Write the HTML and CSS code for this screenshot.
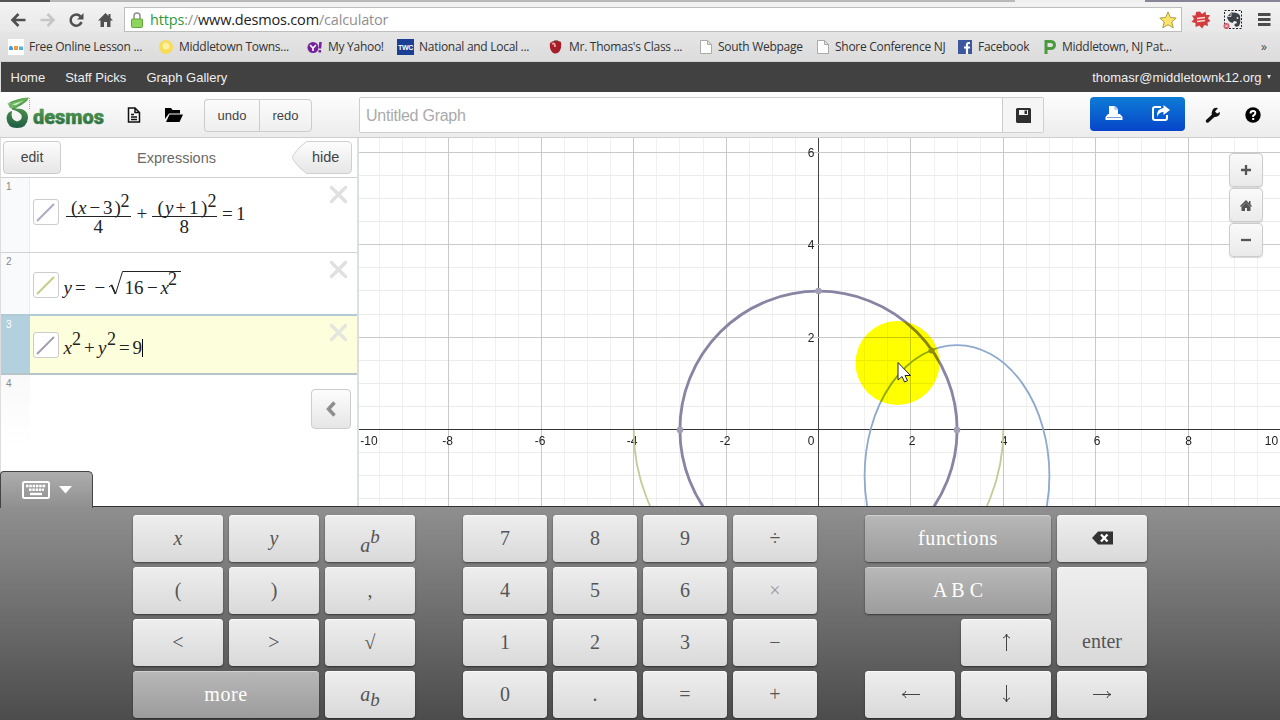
FILE: index.html
```html
<!DOCTYPE html>
<html lang="en">
<head>
  <meta charset="UTF-8" />
  <title>Desmos Calculator</title>
  <link rel="stylesheet" href="styles.css">
</head>
<body>
  <div class="tabstrip"><span class="tab-dark"></span><span class="tab-active"></span><span class="tab-end"></span></div>

  <div class="toolbar">
    <svg width="130" height="30" viewBox="0 0 130 30">
      <g fill="none" stroke="#505050" stroke-width="2.6">
        <path d="M12.500 18H25.500M18.500 12L12.500 18L18.500 24" />
        <path d="M40.500 18H53M47.500 12L53.500 18L47.500 24" stroke="#c6c6c6" />
        <path d="M80.500 14.500A5.600 5.600 0 1 0 81.500 20" />
      </g>
      <path d="M83.500 11V17.500H77Z" fill="#505050" />
      <path d="M105.500 11L98 18.500H100.500V25H104V20H107V25H110.500V18.500H113L110.500 16V12H108.500V14Z" fill="#505050" />
    </svg>
    <div class="address">
      <svg width="14" height="18" viewBox="0 0 14 18">
        <path d="M4 9V5Q4 2 7 2T10 5V9" fill="none" stroke="#8d8d8d" stroke-width="1.500" />
        <rect x="1.500" y="8" width="11" height="8.500" rx="1" fill="#8fd45c" stroke="#5fa73a" />
      </svg>
      <span class="url"><span class="secure">https</span><span class="dim">://</span>www.desmos.com<span class="dim">/calculator</span></span>
      <svg class="star" width="18" height="18" viewBox="0 0 18 18">
        <path d="M9 1L11.400 6.500L17.200 7L12.800 11L14.200 16.800L9 13.700L3.800 16.800L5.200 11L0.800 7L6.600 6.500Z" fill="#fbe46c" stroke="#b19a45" />
      </svg>
    </div>
    <svg width="98" height="30" viewBox="0 0 98 30">
      <path d="M18 9.500L20 12L23.500 9.500L24 13L28 13L26 16.500L28.500 19L25.500 20.500L26 24L22.500 23L20 26.500L17.500 23.500L13.500 25L13.500 21L9.500 20L12 17L10 13.500L13.500 13.500L14 10Z" fill="#d23c3c" />
      <path d="M15 16.500L23 15.500M15 19.500L23 18.500" stroke="#ffd9d9" stroke-width="1.600" />
      <rect x="42.500" y="8.500" width="17" height="18" fill="#eee" stroke="#222" stroke-dasharray="2 1.500" />
      <path d="M45 15L49 10.500Q57 10 58 14Q59 20 57 24Q52 26 52.500 22L55 21Q55 19 52 19L50.500 21Q46 20 45 15Z" fill="#3d4248" />
      <path d="M49 11V14.500H45.500" fill="none" stroke="#eee" stroke-width=".8" />
      <circle cx="55.500" cy="16" r="1" fill="#ddd" />
      <circle cx="44.500" cy="24" r="3" fill="#cf5a69" />
      <path d="M43.200 22.700L45.800 25.300M45.800 22.700L43.200 25.300" stroke="#fff" stroke-width=".8" />
      <path d="M76 12.500H88.500M76 17.500H88.500M76 22.500H88.500" stroke="#4c4c4c" stroke-width="2.800" />
    </svg>
  </div>

  <div class="bookmarks">
    <a class="bm"><svg width="16" height="16"><rect width="16" height="16" fill="#fff" /><path d="M1 8.500Q2.500 5 5 8.500V11H1Z" fill="#3aa0dd" /><path d="M6 7H10V11H6Z" fill="#f29a38" /><path d="M11 11V7.500H15V11Z" fill="#52b3dd" /></svg>Free Online Lesson ...</a>
    <a class="bm"><svg width="16" height="16"><circle cx="8" cy="8" r="7" fill="#f6dc58" /><circle cx="8" cy="7" r="3.500" fill="#fff1a0" /></svg>Middletown Towns...</a>
    <a class="bm"><svg width="16" height="16"><circle cx="6" cy="8.500" r="5.500" fill="#76209b" /><path d="M3 6L6 9L9 6M6 9V12" stroke="#fff" stroke-width="1.600" fill="none" /><path d="M13.500 3L13 9.500M12.800 11V13.500" stroke="#76209b" stroke-width="2.500" /></svg>My Yahoo!</a>
    <a class="bm"><svg width="17" height="16"><rect width="17" height="16" fill="#1b3f95" /><text x="1" y="11" class="twc" textLength="15">TWC</text></svg>National and Local ...</a>
    <a class="bm"><svg width="16" height="16"><path d="M2 4Q7 0 13 3Q14 9 11 13Q7 16 4 13Q1 9 2 4Z" fill="#a51f2b" /><path d="M4 5Q7 3 7 8" stroke="#ee9a9a" stroke-width="2" fill="none" /><path d="M6 2H10" stroke="#55402c" /></svg>Mr. Thomas's Class ...</a>
    <a class="bm"><svg width="14" height="16"><path d="M1.500 1.500H8.500L12.500 5.500V14.500H1.500ZM8.500 1.500V5.500H12.500" fill="#fff" stroke="#aaa" /></svg>South Webpage</a>
    <a class="bm"><svg width="14" height="16"><path d="M1.500 1.500H8.500L12.500 5.500V14.500H1.500ZM8.500 1.500V5.500H12.500" fill="#fff" stroke="#aaa" /></svg>Shore Conference NJ</a>
    <a class="bm"><svg width="16" height="16"><rect x="1" y="1" width="14" height="14" fill="#3b579d" /><path d="M13 4H11.500Q10 4 10 6V15M7 8.500H13" fill="none" stroke="#fff" stroke-width="2.200" /></svg>Facebook</a>
    <a class="bm"><svg width="14" height="16"><path d="M3 15V2.500H7Q11.500 2.500 11.500 6T7 9.500H3" fill="none" stroke="#4b9a3e" stroke-width="3" /></svg>Middletown, NJ Pat...</a>
    <span class="more-bm">»</span>
  </div>

  <nav class="site-nav">
    <a>Home</a>
    <a>Staff Picks</a>
    <a>Graph Gallery</a>
    <span class="user">thomasr@middletownk12.org <i class="caret"></i></span>
  </nav>

  <header class="header">
    <svg class="logo" width="105" height="45" viewBox="0 0 105 45">
      <defs>
        <linearGradient id="green" x1="0" y1="0" x2="0" y2="1">
          <stop offset="0" stop-color="#62ad50" />
          <stop offset="1" stop-color="#1f5c43" />
        </linearGradient>
      </defs>
      <path d="M7 12Q16 6 29 5.500L27 9Q21 14 15 16.500Q28 16 28 26Q27 36 17 36Q7 36 6.500 26Q7 20 12 19Q10 28 17 29.500Q23 28 21.500 23Q19 19 12 17.500Q10 16 15 14L22 9.500Q15 10 7 12Z" fill="url(#green)" />
      <path d="M8 12L27 6.500L15 15.500L10 16Z" fill="#6fb562" />
      <path d="M12 12.500L24 8.500L16 13Z" fill="#dcecd8" />
      <path d="M29.500 6V17" stroke="#7da7cd" stroke-dasharray="1 1" />
      <text x="33" y="32" class="logo-text" textLength="71" lengthAdjust="spacingAndGlyphs" fill="url(#green)" stroke="#3f8a4c" stroke-width=".5">desmos</text>
    </svg>
    <svg class="icon-new" width="14" height="16" viewBox="0 0 14 16">
      <path d="M1.500 1H8L12.500 5.500V15H1.500ZM8 1V5.500H12.500M4 7.500H7M4 10H10M4 12.500H10" fill="none" stroke="#111" stroke-width="1.500" />
    </svg>
    <svg class="icon-open" width="18" height="15" viewBox="0 0 18 15">
      <path d="M0 0H6L7.500 2H15V5.500H4L0 11Z" fill="#000" />
      <path d="M4.500 6.500H18L14.500 14H1Z" fill="#000" />
    </svg>
    <div class="undo-redo"><button>undo</button><button>redo</button></div>
    <div class="title-box">
      <span class="title">Untitled Graph</span>
      <button class="save">
        <svg width="15" height="15" viewBox="0 0 15 15"><path d="M1 0H14L15 1V15H1L0 14V1Z" fill="#2e2e2e" /><path d="M3 2H12V7H3Z" fill="#f2f2f2" /><path d="M8.500 2.500H11V6H8.500Z" fill="#2e2e2e" /></svg>
      </button>
    </div>
    <div class="share">
      <svg width="18" height="16" viewBox="0 0 18 16"><path d="M4 1H10L13 4V9H4Z" fill="#fff" /><path d="M10 1V4H13" fill="none" stroke="#6da7e6" /><path d="M3 9H15L17.500 12V15H.5V12Z" fill="#fff" /><path d="M2 12.500H16" stroke="#1861cc" stroke-width=".6" /></svg>
      <svg width="18" height="16" viewBox="0 0 18 16"><path d="M9 2H3Q1 2 1 4V13Q1 15 3 15H13Q15 15 15 13V10" fill="none" stroke="#fff" stroke-width="2" /><path d="M11.500 0L18 5L11.500 10V7Q7 7 5 12Q4 4 11.500 3Z" fill="#fff" /></svg>
    </div>
    <svg class="icon-wrench" width="16" height="17" viewBox="0 0 16 17">
      <path d="M2.500 14L9 8" stroke="#111" stroke-width="3.500" stroke-linecap="round" />
      <path d="M13 1Q9 0 7.500 3Q6 6 7 9Q10 11 13 9Q15 8 15 5L12 6.500L10 4.500Z" fill="#111" />
    </svg>
    <svg class="icon-help" width="16" height="16" viewBox="0 0 16 16">
      <circle cx="8" cy="8" r="7.700" fill="#000" />
      <path d="M5.500 6.500Q5.500 4 8 4T10.300 6.200Q10.300 7.500 8.200 8.600V10" fill="none" stroke="#fff" stroke-width="1.900" />
      <rect x="7.200" y="11" width="2" height="2" fill="#fff" />
    </svg>
  </header>

  <main class="main">
    <section class="panel">
      <div class="panel-head">
        <button class="edit">edit</button>
        <span class="panel-title">Expressions</span>
        <svg width="60" height="34" viewBox="0 0 60 34">
          <defs>
            <linearGradient id="btn" x1="0" y1="0" x2="0" y2="1">
              <stop offset="0" stop-color="#fdfdfd" />
              <stop offset="1" stop-color="#e6e6e6" />
            </linearGradient>
          </defs>
          <path d="M14.500 .5H55Q59.500 .5 59.500 5V28Q59.500 32.500 55 32.500H14.500L8 27Q.5 19 .5 16.500T8 6Z" fill="url(#btn)" stroke="#cfcfcf" />
          <text x="20" y="20.500" class="hide-text">hide</text>
        </svg>
      </div>

      <div class="expr row1">
        <div class="num">1</div>
        <div class="swatch"><svg width="24" height="24"><path d="M3 21L20 4" stroke="#a9abc3" stroke-width="2" /></svg></div>
        <svg class="math" width="270" height="74" viewBox="60 178 270 74">
          <text y="214"><tspan x="71">(</tspan><tspan x="78" class="it">x</tspan><tspan x="89.500">−</tspan><tspan x="103">3</tspan><tspan x="114.500">)</tspan></text>
          <text x="120.500" y="207" class="sup">2</text>
          <text x="93.500" y="233">4</text>
          <text x="136.500" y="220">+</text>
          <text y="214"><tspan x="157.500">(</tspan><tspan x="165" class="it">y</tspan><tspan x="175.500">+</tspan><tspan x="189">1</tspan><tspan x="201">)</tspan></text>
          <text x="207.500" y="207" class="sup">2</text>
          <text x="179.500" y="233">8</text>
          <text y="220"><tspan x="222">=</tspan><tspan x="236">1</tspan></text>
          <path d="M66 216.500H131M152 216.500H217" stroke="#222" />
        </svg>
        <span class="close"></span>
      </div>

      <div class="expr row2">
        <div class="num">2</div>
        <div class="swatch"><svg width="24" height="24"><path d="M3 21L20 4" stroke="#c6cc86" stroke-width="2" /></svg></div>
        <svg class="math" width="270" height="61" viewBox="60 253 270 61">
          <text y="294"><tspan x="63.500" class="it">y</tspan><tspan x="75">=</tspan><tspan x="94.500">−</tspan><tspan x="124.500">16</tspan><tspan x="147">−</tspan><tspan x="160.500" class="it">x</tspan></text>
          <text x="168" y="285" class="sup">2</text>
          <path d="M109 287L111.500 285L115.500 294L122.500 271.500H181" fill="none" stroke="#222" />
          <path d="M111.500 285L115.500 294" stroke="#222" stroke-width="1.800" />
        </svg>
        <span class="close"></span>
      </div>

      <div class="expr row3 active">
        <div class="num">3</div>
        <div class="swatch"><svg width="24" height="24"><path d="M3 21L20 4" stroke="#a09fae" stroke-width="2" /></svg></div>
        <svg class="math" width="270" height="58" viewBox="60 316 270 58">
          <text y="354"><tspan x="63.500" class="it">x</tspan><tspan x="84">+</tspan><tspan x="98" class="it">y</tspan><tspan x="119">=</tspan><tspan x="132.500">9</tspan></text>
          <text y="345" class="sup"><tspan x="72">2</tspan><tspan x="107">2</tspan></text>
          <path d="M142.500 339V357" stroke="#000" />
        </svg>
        <span class="close"></span>
      </div>

      <div class="expr row4">
        <div class="num">4</div>
        <button class="collapse"><svg width="14" height="16" viewBox="0 0 14 16"><path d="M10.500 1.500L4.500 8L10.500 14.500" fill="none" stroke="#8e8e8e" stroke-width="3.500" /></svg></button>
      </div>
    </section>

    <section class="graph">
      <svg id="plot" width="921" height="368" viewBox="359 138 921 368">
        <g id="grid"></g>
        <path d="M633.700 430A184.800 184.800 0 0 0 1003.300 430" class="curve green" />
        <ellipse cx="957" cy="475.800" rx="92.400" ry="130.700" class="curve blue" />
        <circle cx="818.500" cy="429.800" r="138.600" class="curve purple" />
        <g fill="#a3a0b5">
          <circle cx="818.500" cy="291" r="3.300" />
          <circle cx="680" cy="430" r="3.300" />
          <circle cx="957" cy="430" r="3.300" />
          <circle cx="931.500" cy="350.500" r="3" fill="#8f8f9d" />
        </g>
        <circle cx="897.500" cy="363" r="42" class="spot" />
        <path d="M898 362.500V380L902 376.500L904.500 382L907.500 380.700L905 375.500H910.500Z" fill="#fff" stroke="#222" />
      </svg>
      <div class="zoom">
        <button><svg width="12" height="12"><path d="M1 6H11M6 1V11" stroke="#555" stroke-width="2.300" /></svg></button>
        <button><svg width="12" height="11" viewBox="0 0 12 11"><path d="M6 0L0 6L1 7L6 2.500L11 7L12 6L10.500 4.500V1H9V3Z" fill="#555" /><path d="M6 2.500L10.500 7V11H7V8H5V11H1.500V7Z" fill="#555" /></svg></button>
        <button><svg width="12" height="12"><path d="M1 6H11" stroke="#555" stroke-width="2.300" /></svg></button>
      </div>
    </section>
  </main>

  <footer class="keypad">
    <div class="kb-tab">
      <svg width="28" height="18" viewBox="0 0 28 18">
        <rect x="1" y="1" width="26" height="16" rx="1.500" fill="none" stroke="#fff" stroke-width="2" />
        <path d="M4 5H24M7 8.800H22" stroke="#fff" stroke-width="2.600" stroke-dasharray="2.500 .8" />
        <path d="M8 13H20" stroke="#fff" stroke-width="2.400" />
      </svg>
      <svg width="13" height="8"><path d="M0 0H13L6.500 7.500Z" fill="#fff" /></svg>
    </div>
    <div class="keys wide">
      <button class="it">x</button><button class="it">y</button><button class="it power">a<sup>b</sup></button>
      <button>(</button><button>)</button><button>,</button>
      <button>&lt;</button><button>&gt;</button><button>√</button>
      <button class="dark span2">more</button><button class="it">a<sub>b</sub></button>
    </div>
    <div class="keys digits">
      <button>7</button><button>8</button><button>9</button><button>÷</button>
      <button>4</button><button>5</button><button>6</button><button class="faint">×</button>
      <button>1</button><button>2</button><button>3</button><button>−</button>
      <button>0</button><button>.</button><button>=</button><button>+</button>
    </div>
    <div class="keys wide">
      <button class="dark span2">functions</button>
      <button><svg width="21" height="14" viewBox="0 0 21 14"><path d="M0 7L6 .5H21V13.500H6Z" fill="#333" /><path d="M9 3.500L15.500 10.500M15.500 3.500L9 10.500" stroke="#fff" stroke-width="2.300" /></svg></button>
      <button class="dark span2 abc">A B C</button>
      <button class="enter">enter</button>
      <button class="up"><svg width="9" height="18"><path d="M4.500 1V18M1 5Q4 4 4.500 1Q5 4 8 5" fill="none" stroke="#444" /></svg></button>
      <button><svg width="19" height="9"><path d="M19 4.500H1M5 1Q4 4 1 4.500Q4 5 5 8" fill="none" stroke="#444" /></svg></button>
      <button><svg width="9" height="18"><path d="M4.500 0V17M1 13Q4 14 4.500 17Q5 14 8 13" fill="none" stroke="#444" /></svg></button>
      <button><svg width="19" height="9"><path d="M0 4.500H18M14 1Q15 4 18 4.500Q15 5 14 8" fill="none" stroke="#444" /></svg></button>
    </div>
  </footer>

  <script src="script.js"></script>
</body>
</html>
```

FILE: styles.css
```css
* {
  box-sizing: border-box;
}

body {
  margin: 0;
  width: 1280px;
  height: 720px;
  overflow: hidden;
  font-family: "Liberation Sans", Arial, sans-serif;
  background: #fff;
}

button {
  margin: 0;
  padding: 0;
  font-family: inherit;
  color: #444;
  border: 1px solid #ccc;
  background: linear-gradient(#fdfdfd, #e6e6e6);
}

svg {
  display: block;
  flex-shrink: 0;
}

/* browser */
.tabstrip {
  display: flex;
  height: 2px;
  background: #b9b9b9;
}

.tab-dark {
  width: 50px;
  background: #555;
}

.tab-active {
  width: 130px;
  margin-left: 965px;
  background: #efefef;
}

.tab-end {
  flex: 1;
  background: #888596;
}

.toolbar {
  display: flex;
  height: 30px;
  background: linear-gradient(#f3f3f3, #e8e8e8);
}

.address {
  display: flex;
  align-items: center;
  width: 1058px;
  height: 25px;
  margin: 5px 0 0 -6px;
  padding-left: 5px;
  background: #fff;
  border: 1px solid #bdbdbd;
}

.url {
  margin-left: 6px;
  font: 14.5px/20px "Open Sans", sans-serif;
  letter-spacing: -0.18px;
  color: #222;
}

.secure {
  color: #2e9a3c;
}

.dim {
  color: #909090;
}

.star {
  margin: 0 4px 0 auto;
}

.bookmarks {
  display: grid;
  grid-template-columns: 150px 149px 90px 151px 151px 117px 141px 86px 212px 20px;
  align-items: center;
  height: 30px;
  padding-left: 8px;
  background: linear-gradient(#e5e5e5, #dcdcdc);
  border-bottom: 1px solid #cfcfcf;
  font: 12px "Open Sans", sans-serif;
  letter-spacing: -0.28px;
  color: #333;
}

.bm {
  display: flex;
  align-items: center;
  gap: 5px;
  white-space: nowrap;
}

.twc {
  font: bold 7px "Liberation Sans", sans-serif;
  fill: #fff;
}

.more-bm {
  color: #444;
  padding-left: 6px;
}

/* site */
.site-nav {
  display: flex;
  align-items: center;
  gap: 20px;
  height: 30px;
  padding: 0 9.5px;
  border-left: 1px solid #ddd;
  background: #414141;
  color: #eee;
  font-size: 13px;
}

.user {
  display: flex;
  align-items: center;
  margin-left: auto;
}

.caret {
  margin-left: 5px;
  border: 2.5px solid transparent;
  border-top: 4px solid #ddd;
  border-bottom: 0;
}

.header {
  display: flex;
  align-items: flex-start;
  height: 46px;
  background: linear-gradient(#fefefe, #ececec);
  border-bottom: 1px solid #cfcfcf;
}

.logo-text {
  font: 900 20px "Roboto", sans-serif;
}

.icon-new {
  margin: 15px 0 0 22px;
}

.icon-open {
  margin: 16px 0 0 24px;
}

.undo-redo {
  display: flex;
  width: 108px;
  height: 33px;
  margin: 7px 0 0 21px;
}

.undo-redo button {
  flex: 1;
  font-size: 13px;
  border-radius: 0 4px 4px 0;
  background: linear-gradient(#fbfbfb, #efefef);
}

.undo-redo button:first-child {
  flex: 0 0 55px;
  border-right: 0;
  border-radius: 4px 0 0 4px;
}

.title-box {
  display: flex;
  width: 685px;
  height: 36px;
  margin: 5px 0 0 47px;
  background: #fff;
  border: 1px solid #cfcfcf;
  border-radius: 2px;
}

.title {
  flex: 1;
  padding-left: 6px;
  font-size: 16px;
  letter-spacing: -0.25px;
  line-height: 35px;
  color: #aaa;
}

.save {
  width: 41px;
  border-width: 0 0 0 1px;
  background: #f5f5f5;
  display: flex;
  align-items: center;
  justify-content: center;
}

.share {
  display: flex;
  justify-content: space-between;
  width: 95px;
  height: 34px;
  margin: 5px 0 0 46px;
  padding: 8px 15px;
  border-radius: 4px;
  background: linear-gradient(#0d7cd6, #0745ca);
}

.icon-wrench {
  margin: 15px 0 0 20px;
}

.icon-help {
  margin: 15px 0 0 24px;
}

.main {
  display: flex;
  height: 368px;
}

.panel {
  width: 359px;
  border-left: 1px solid #ddd;
  border-right: 2px solid #dcdfe2;
}

.panel-head {
  display: flex;
  height: 40px;
  padding: 3px 5px 0 2px;
  border-bottom: 1px solid #cfd1d3;
}

.edit {
  width: 58px;
  height: 33px;
  padding-bottom: 1px;
  border-radius: 4px;
  font-size: 14px;
}

.panel-title {
  flex: 1;
  text-align: center;
  font-size: 14.5px;
  line-height: 34px;
  color: #6a6a6a;
}

.hide-text {
  font-size: 14.5px;
  fill: #444;
}

.expr {
  display: flex;
  align-items: center;
  position: relative;
  border-bottom: 1px solid #d2d2d2;
}

.row1 {
  height: 75px;
}

.row2 {
  height: 61px;
  border-bottom: 0;
}

.row3 {
  height: 61px;
}

.row4 {
  height: 70px;
  align-items: flex-start;
  border-bottom: 0;
}

.num {
  align-self: stretch;
  flex-shrink: 0;
  width: 29px;
  padding: 3px 0 0 5px;
  font-size: 10px;
  color: #888;
  background: #f8fafb;
  border-right: 1px solid #e9ebec;
}

.row4 .num {
  background: linear-gradient(#faf9fa, #fff);
  border-right: 0;
}

.active {
  background: #fdfedb;
  border-top: 2px solid #b0cbd4;
  border-bottom: 2px solid #b5c5c8;
}

.active .num {
  color: #fff;
  background: #b3d0de;
  border-right: 0;
}

.swatch {
  flex-shrink: 0;
  width: 26px;
  height: 26px;
  margin: 0 1px 0 3px;
  border: 1px solid #ccc;
  border-radius: 3px;
  background: #fff;
}

.row1 .swatch {
  margin-bottom: 7px;
}

.row2 .swatch {
  margin-top: 3px;
}

.row3 .swatch {
  margin-top: 1px;
}

.math {
  font: 19px "Liberation Serif", "Times New Roman", serif;
  fill: #222;
}

.math .sup {
  font-size: 18px;
}

.it {
  font-style: italic;
}

/* row delete cross */
.close {
  position: absolute;
  top: 8px;
  right: 10px;
  width: 17px;
  height: 17px;
  background:
    linear-gradient(45deg, transparent 44%, #dedede 44%, #dedede 56%, transparent 56%),
    linear-gradient(-45deg, transparent 44%, #dedede 44%, #dedede 56%, transparent 56%);
  opacity: 0.9;
}

.active .close {
  opacity: 0.75;
}

.collapse {
  display: flex;
  align-items: center;
  justify-content: center;
  width: 40px;
  height: 40px;
  margin: 14px 6px 0 auto;
  border-radius: 4px;
}

/* graph */
.graph {
  position: relative;
  width: 921px;
}

#plot {
  isolation: isolate;
}

#grid text {
  font: 12px "Liberation Sans", Arial, sans-serif;
  fill: #222;
}

.curve {
  fill: none;
  stroke-width: 1.8;
}

.green {
  stroke: #c3cc98;
}

.blue {
  stroke: #8da9cd;
}

.purple {
  stroke: #8884a3;
  stroke-width: 2.8;
}

.spot {
  fill: #ff0;
  mix-blend-mode: multiply;
}

.zoom {
  position: absolute;
  top: 15px;
  right: 17px;
  display: flex;
  flex-direction: column;
  gap: 1px;
}

.zoom button {
  display: flex;
  align-items: center;
  justify-content: center;
  width: 34px;
  height: 34px;
  border-radius: 4px;
  background: linear-gradient(#fafafa, #eaeaea);
  box-shadow: 0 1px 1px rgba(0, 0, 0, 0.15);
}

/* keypad */
.keypad {
  position: relative;
  display: flex;
  align-items: flex-start;
  height: 214px;
  padding: 8px 0 0 133px;
  border-top: 1px solid #333;
  background: linear-gradient(#8f8f8f, #4c4c4c);
}

.kb-tab {
  position: absolute;
  left: 0;
  top: -36px;
  display: flex;
  align-items: center;
  gap: 9px;
  width: 93px;
  height: 37px;
  padding-left: 21px;
  border: 1px solid #444;
  border-bottom: 0;
  border-radius: 4px 5px 0 0;
  background: linear-gradient(#adadad, #8f8f8f);
}

.keys {
  display: grid;
  gap: 5px 6px;
  grid-auto-rows: 47px;
}

.keys.wide {
  grid-template-columns: repeat(3, 90px);
}

.digits {
  grid-template-columns: repeat(4, 84px);
  margin: 0 48px;
}

.keys button {
  display: flex;
  align-items: center;
  justify-content: center;
  padding-bottom: 1px;
  font-family: "Liberation Serif", "Times New Roman", serif;
  font-size: 20px;
  color: #555;
  border: 0;
  border-radius: 4px;
  background: linear-gradient(#eeeeef, #d9d9da);
  box-shadow: inset 0 1px #fafafa, 0 1px 2px rgba(0, 0, 0, 0.5);
}

.keys .it {
  font-style: italic;
}

.keys .faint {
  color: #999;
}

.keys sup,
.keys sub {
  font-size: 19px;
  line-height: 1;
}

.keys .power {
  padding-top: 15px;
}

.keys sup {
  margin-top: -18px;
}

.keys sub {
  margin-top: 10px;
}

.keys .dark {
  color: #fff;
  letter-spacing: 0.6px;
  background: linear-gradient(#b8b8b8, #9c9c9c);
  box-shadow: inset 0 1px #d0d0d0, 0 1px 2px rgba(0, 0, 0, 0.5);
}

.keys .abc {
  letter-spacing: 0;
}

.span2 {
  grid-column: span 2;
}

.keys .enter {
  grid-row: span 2;
  align-items: flex-end;
  padding-bottom: 13px;
}

.up {
  grid-column: 2;
}
```

FILE: script.js
```js
const grid = document.getElementById('grid');
const ox = 818.5;
const oy = 429.5;
const unit = 46.2;
let html = '';

function line(d, color) {
  html += `<path d="${d}" stroke="${color}" />`;
}

function snap(v) {
  return Math.floor(v) + 0.5;
}

// minor lines first so the major ones stay on top
for (const major of [false, true]) {
  for (let i = -19; i <= 19; i++) {
    if ((i % 4 === 0) !== major) continue;
    const x = snap(ox + i * unit / 2);
    line(`M${x} 138V506`, i === 0 ? '#444' : major ? '#c9c9c9' : '#f0f0f0');
  }
  for (let i = -3; i <= 12; i++) {
    if ((i % 4 === 0) !== major) continue;
    const y = snap(oy - i * unit / 2);
    line(`M359 ${y}H1280`, i === 0 ? '#333' : major ? '#c9c9c9' : '#ebebeb');
  }
}

const labels = [
  ['-10', 369], ['-8', 447.5], ['-6', 540], ['-4', 632], ['-2', 725],
  ['0', 811], ['2', 912], ['4', 1004], ['6', 1097], ['8', 1188.5], ['10', 1271.5]
];
for (const [t, x] of labels) {
  html += `<text x="${x}" y="445" text-anchor="middle">${t}</text>`;
}
for (const n of [2, 4, 6]) {
  html += `<text x="811" y="${Math.round(oy - n * unit + 4.5)}" text-anchor="middle">${n}</text>`;
}

grid.innerHTML = html;
```
